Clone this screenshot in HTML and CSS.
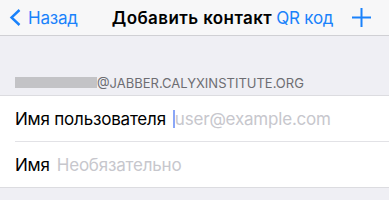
FILE: index.html
```html
<!DOCTYPE html>
<html lang="ru">
<head>
<meta charset="utf-8">
<link rel="stylesheet" href="styles.css">
</head>
<body>
<header class="nav">
  <a class="back">
    <svg class="chev" width="13" height="17" viewBox="0 0 13 17"><path d="M10.5 1 L2.5 8.5 L10.5 16" fill="none" stroke="#1a82fb" stroke-width="2.4"/></svg>
    <span>Назад</span>
  </a>
  <h1 class="title">Добавить контакт</h1>
  <a class="qr">QR код</a>
  <svg class="plus" width="19" height="19" viewBox="0 0 19 19"><path d="M9.5 0 V19 M0 9.5 H19" stroke="#1a82fb" stroke-width="2"/></svg>
</header>
<main class="content">
  <div class="section-head"><span class="redact"></span><span class="domain">@JABBER.CALYXINSTITUTE.ORG</span></div>
  <div class="group">
    <div class="row sep"><span class="label">Имя пользователя</span><span class="caret"></span><span class="ph">user@example.com</span></div>
    <div class="row"><span class="label">Имя</span><span class="ph gap">Необязательно</span></div>
  </div>
</main>
</body>
</html>
```
FILE: styles.css
```css
html, body { margin: 0; padding: 0; }
body {
  width: 389px; height: 200px; overflow: hidden;
  background: #efeff4;
  font-family: Inter, "Noto Sans", "Liberation Sans", sans-serif;
  -webkit-font-smoothing: antialiased;
}
.nav {
  height: 35px;
  background: #f7f7f8;
  border-bottom: 1px solid #d0d0d4;
  display: flex; align-items: center;
  padding: 0 0 0 9px;
  position: relative;
}
.back {
  display: flex; align-items: center; gap: 6px;
  color: #1a82fb; font-size: 17px; letter-spacing: -0.2px;
}
.chev { display: block; }
.title {
  margin: 0 0 0 34px;
  font-size: 17px; font-weight: 600; letter-spacing: 0.4px;
  color: #000;
}
.qr { margin-left: 4px; color: #1a82fb; font-size: 17px; letter-spacing: -0.2px; }
.plus { margin-left: 19px; }
.content { padding-top: 36px; }
.section-head {
  display: flex; align-items: center; height: 21px; padding-left: 15px;
}
.redact { width: 82px; height: 11px; background: #c3c3c6; filter: blur(0.6px); }
.domain { font-size: 13px; color: #6d6d72; letter-spacing: 0px; }
.group {
  margin-top: 2px;
  background: #fff;
  border-top: 1px solid #dcdce0;
  border-bottom: 1px solid #dcdce0;
  padding-left: 15px;
}
.row {
  height: 45px; display: flex; align-items: center;
  font-size: 17px; letter-spacing: -0.2px;
}
.row.sep { border-bottom: 1px solid #e2e2e6; }
.label { color: #000; }
.caret { width: 2px; height: 18px; background: #8aa6f7; margin-left: 7px; }
.ph { color: #c7c7cd; }
.gap { margin-left: 7px; }
```
